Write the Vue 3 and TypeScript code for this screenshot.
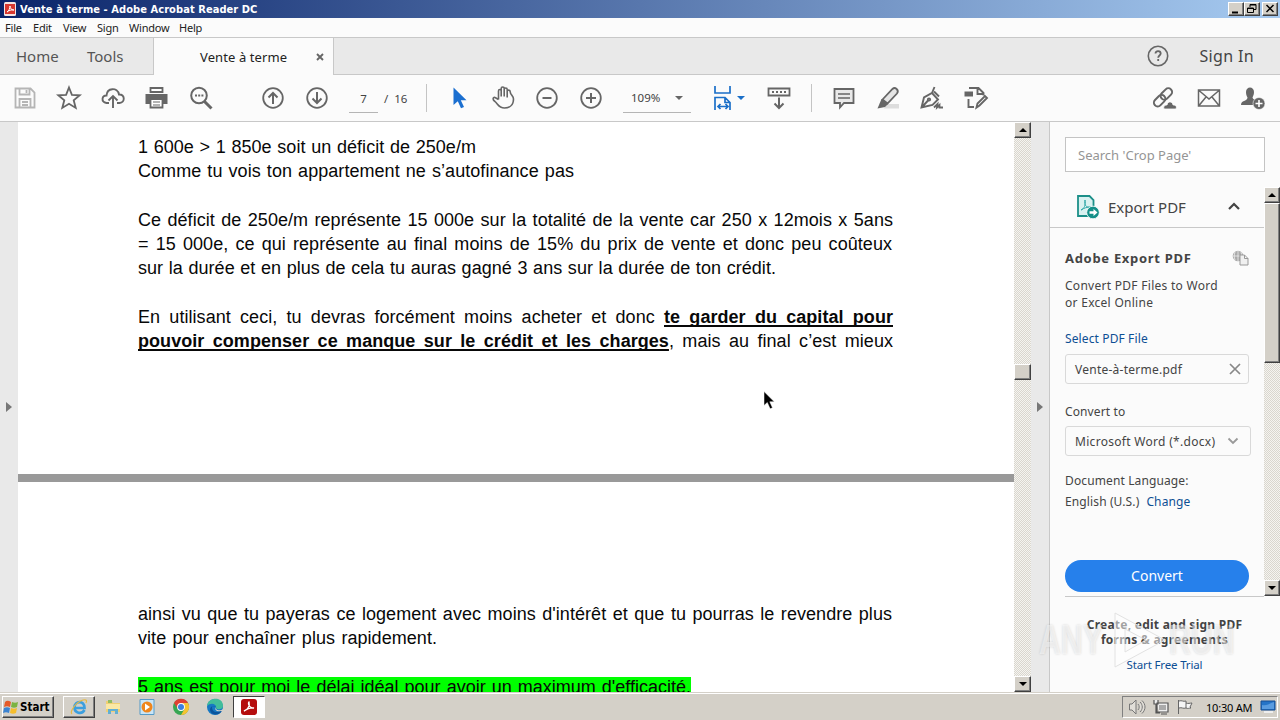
<script setup lang="ts">
import { ref } from "vue";

interface DocumentLine {
  text: string;
  strong?: string;
  tail?: string;
  width: number;
}

// States.
const menuItems = ref<string[]>(["File", "Edit", "View", "Sign", "Window", "Help"]);
const searchText = ref<string>("");

const firstPageBlocks: DocumentLine[][] = [
  [
    { text: "1 600e > 1 850e soit un déficit de 250e/m", width: 338 },
    { text: "Comme tu vois ton appartement ne s’autofinance pas", width: 436 },
  ],
  [
    { text: "Ce déficit de 250e/m représente 15 000e sur la totalité de la vente car 250 x 12mois x 5ans", width: 755 },
    { text: "= 15 000e, ce qui représente au final moins de 15% du prix de vente et donc peu coûteux", width: 754 },
    { text: "sur la durée et en plus de cela tu auras gagné 3 ans sur la durée de ton crédit.", width: 638 },
  ],
  [
    { text: "En utilisant ceci, tu devras forcément moins acheter et donc ", strong: "te garder du capital pour", width: 755 },
    { text: "", strong: "pouvoir compenser ce manque sur le crédit et les charges", tail: ", mais au final c’est mieux", width: 755 },
  ],
];

const secondPageLines: DocumentLine[] = [
  { text: "ainsi vu que tu payeras ce logement avec moins d'intérêt et que tu pourras le revendre plus", width: 754 },
  { text: "vite pour enchaîner plus rapidement.", width: 299 },
];
</script>

<template>
  <div class="desktop">
    <!-- TitleBar -->
    <header class="title-bar">
      <svg class="title-icon" viewBox="0 0 12 14">
        <rect width="12" height="14" rx="1.5" fill="#f5e5e3" />
        <path d="M1 2h10v10H1z" fill="#d8382f" />
        <path d="M3 10c2-1 3-4 3-6 0 2 1 4 4 4-3-.5-5 .5-7 2z" fill="none" stroke="#fff" />
      </svg>
      <span class="title-text">Vente à terme - Adobe Acrobat Reader DC</span>
      <div class="window-buttons">
        <svg class="raised" viewBox="0 0 14 12"><path d="M3 9.5h6" stroke="#000" stroke-width="2" /></svg>
        <svg class="raised" viewBox="0 0 14 12">
          <path d="M5 4V1.5h6v5H9M5 2h6M2.500 5h6v4.500h-6zM2.500 5.500h6" fill="none" stroke="#000" />
        </svg>
        <svg class="raised close" viewBox="0 0 14 12"><path d="M3.500 2l7 7M10.500 2l-7 7" stroke="#000" stroke-width="1.500" /></svg>
      </div>
    </header>

    <nav class="menu-bar">
      <span v-for="item in menuItems" v-bind:key="item" v-bind:class="`menu-${item.toLowerCase()}`">{{ item }}</span>
    </nav>

    <!-- Tabs -->
    <div class="tab-bar">
      <div class="main-tabs">
        <span class="tab-home">Home</span>
        <span class="tab-tools">Tools</span>
      </div>
      <div class="document-tab">
        <span>Vente à terme</span>
        <svg width="8" height="8" viewBox="0 0 8 8"><path d="M1 1l6 6M7 1L1 7" stroke="#666" stroke-width="1.900" /></svg>
      </div>
      <div class="account">
        <svg width="22" height="22" viewBox="0 0 22 22">
          <circle cx="11" cy="11" r="9.700" fill="none" stroke="#666" stroke-width="1.600" />
          <path d="M8.500 8.500c0-3.300 5.200-3 5.200 0 0 2-2.500 2-2.500 4.200M11.200 14v2" fill="none" stroke="#666" stroke-width="1.800" />
        </svg>
        <span>Sign In</span>
      </div>
    </div>

    <!-- Toolbar -->
    <div class="toolbar">
      <div class="tools file-tools">
        <svg class="muted" viewBox="0 0 24 24"><path d="M2.500 2.500h15l4 4v15h-19zM6.500 2.500v6h10v-6M13.500 4v3M6.500 21v-8h11v8M9 16h6M9 19h6" /></svg>
        <svg viewBox="0 0 24 24"><path d="M12 1.500l2.900 7.300 7.800.5-6 5 2 7.600-6.700-4.200-6.700 4.200 2-7.600-6-5 7.800-.5z" /></svg>
        <svg viewBox="0 0 24 24"><path d="M8 17H5.500C-.5 16 1 9 5.500 9.500 6 1.500 16.500 1 18 8.500c6-.5 6.500 8 .5 8.500H16M12 22V10.500M7.500 14.500L12 10l4.500 4.500" stroke-width="1.900" /></svg>
        <svg viewBox="0 0 24 24">
          <path d="M5.500 2h12v4h-12z" fill="#fff" />
          <path d="M.500 8h22v10H18v-4H5v4H.5z" fill="#666" stroke="none" />
          <path d="M5.500 13h12v8.500h-12z" fill="#fff" /><path d="M8 16h7M8 19h7" stroke-width="1.200" />
        </svg>
        <svg viewBox="0 0 24 24"><circle cx="10" cy="9.500" r="7.800" stroke-width="2" /><path d="M15.500 15.500l7 7" stroke-width="3" /><path d="M6 9.500h2M9.200 9.500h2M12.400 9.500h2" /></svg>
      </div>
      <div class="tools page-tools">
        <svg viewBox="0 0 24 24"><circle cx="12" cy="12" r="9.800" /><path d="M12 18V7M7.500 11.500L12 7l4.500 4.500" stroke-width="2" /></svg>
        <svg viewBox="0 0 24 24"><circle cx="12" cy="12" r="9.800" /><path d="M12 6v11M7.500 12.500L12 17l4.500-4.500" stroke-width="2" /></svg>
      </div>
      <div class="page-field">7</div>
      <span class="page-total">/&nbsp; 16</span>
      <i class="divider"></i>
      <div class="tools view-tools">
        <svg viewBox="0 0 24 24"><path d="M6.500 1.500v17.500l4.300-3.700 3.200 7 3-1.400-3.200-6.600h5.700z" fill="#1b6fd0" stroke="none" /></svg>
        <svg viewBox="0 0 24 24"><path d="M7 14V5.500c0-2 2.700-2 2.700 0V11 3c0-2 3-2 3 0v8-7c0-2 3-2 3 0v8-6c0-2 3-1.700 3 .2 0 3 3.300 4.300 3.300 7.300 0 6-4 9-9 9-6 0-6.500-4-9.500-6.500C.500 14 1.500 11 4 12.200L7 14" stroke-width="1.600" transform="translate(.5 -.5)" /></svg>
        <svg viewBox="0 0 24 24"><circle cx="12" cy="12" r="9.800" /><path d="M7.500 12h9" stroke-width="2" /></svg>
        <svg viewBox="0 0 24 24"><circle cx="12" cy="12" r="9.800" /><path d="M7 12h10M12 7v10" stroke-width="2" /></svg>
      </div>
      <div class="zoom-field"><span>109%</span><i class="caret"></i></div>
      <div class="fit-tool">
        <svg viewBox="0 0 20 26"><path d="M2 1v7h15V1M2 25V12.500h10l5 5V25M12 12.500v5h5M5 21.500h10M7.500 19L5 21.500 7.500 24M12.500 19l2.500 2.500-2.500 2.500" fill="none" stroke="#1b6fc8" stroke-width="1.700" /></svg>
        <i class="caret blue"></i>
      </div>
      <div class="tools"><svg viewBox="0 0 24 24"><path d="M1.500 2.500h21v7h-21z" /><path d="M5 6h14" stroke-dasharray="2 2" /><path d="M12 11.500V22M7.500 17.500L12 22l4.500-4.500" stroke-width="2" /></svg></div>
      <i class="divider second"></i>
      <div class="tools comment-tools">
        <svg viewBox="0 0 24 24"><path d="M2.500 3h19v14h-9.500l-4 4.500V17H2.500z" fill="#e9e9e9" /><path d="M6 8h12M6 12h12" stroke-width="1.500" /></svg>
        <svg viewBox="0 0 24 24"><path d="M10 18h13v4.500H8z" fill="#ddd" stroke="none" /><path d="M6.500 13.500L16.500 3c2.500-2.500 7 1 4.500 4.500L11.500 17.500z" fill="#e5e5e5" /><path d="M5.500 13l6.500 5-3 3-7.500 1.500z" fill="#666" stroke="none" /></svg>
        <svg viewBox="0 0 24 24"><path d="M1.500 21.500L4 11.500 12 7l6 6.500L12.500 19zM2 21l6.500-7M12 7l2.500-6M14 5.500l5 5" stroke-width="1.900" /><circle cx="9" cy="13.500" r="1.200" /><path d="M14 21.500l3.500-3.500-.5 3.500 2.500-2.500v2.500h3.500" stroke-width="1.800" /></svg>
        <svg viewBox="0 0 24 24"><path d="M5 2h9.500l5 5v2.500M13.500 2v6h5.500M4.500 13v8h5.500M12.500 21.500l1-4 7.500-7.500 2 2-7.500 7.500z" stroke-width="1.900" /><path d="M.500 5.500h8.500v5H.500z" fill="#666" stroke="none" /></svg>
      </div>
      <div class="tools share-tools">
        <svg viewBox="0 0 24 24"><g transform="rotate(-45 10 11)" stroke-width="2"><rect x="-1.500" y="7.500" width="13" height="7.500" rx="3.700" /><rect x="8" y="7.500" width="13" height="7.500" rx="3.700" /></g><path d="M11 23c-1-3 1-4 3-4 1-5 6-3 6 0 3-.5 4 2 3 4z" fill="#666" stroke="#fbfbfb" stroke-width=".8" /></svg>
        <svg viewBox="0 0 24 24"><path d="M1.500 4h21v16h-21zM2 4.500l10 8.500 10-8.500M2 19.500l7-8.500M22 19.500l-7-8.500" stroke-width="1.500" /></svg>
        <svg viewBox="0 0 24 24"><path d="M5 6c0-6 8-6 8 0 0 3-1 4-1.500 5.500.5 2 2.500 2 3 3L13 19H0c0-5 6-3 6.500-7.500C5.500 10 5 8 5 6z" fill="#666" stroke="none" /><circle cx="18" cy="17.500" r="6" fill="#666" stroke="#fbfbfb" stroke-width=".6" /><path d="M14.500 17.500h7M18 14v7" stroke="#fff" stroke-width="1.600" /></svg>
      </div>
    </div>

    <!-- Workspace -->
    <main class="workspace">
      <div class="left-rail"><i class="rail-arrow"></i></div>
      <article class="document">
        <section class="page first-page">
          <div v-for="(block, blockIndex) in firstPageBlocks" v-bind:key="blockIndex" class="block">
            <p v-for="line in block" v-bind:key="line.text" v-bind:style="{ width: `${line.width}px` }">{{ line.text }}<b v-if="line.strong">{{ line.strong }}</b>{{ line.tail }}</p>
          </div>
        </section>
        <section class="page second-page">
          <p v-for="line in secondPageLines" v-bind:key="line.text" v-bind:style="{ width: `${line.width}px` }">{{ line.text }}</p>
          <p class="highlighted"><span>5 ans est pour moi le délai idéal pour avoir un maximum d'efficacité.</span></p>
        </section>
        <svg class="pointer" viewBox="0 0 12 19"><path d="M1 .5v14l3.300-3 2.800 6.300 2.400-1-2.700-6h4.500z" fill="#000" stroke="#fff" stroke-width=".5" /></svg>
      </article>

      <div class="scrollbar document-scrollbar">
        <div class="scroll-button raised"><i class="triangle-up"></i></div>
        <div class="thumb raised"></div>
        <div class="scroll-button raised"><i class="triangle-down"></i></div>
      </div>
      <div class="right-rail"><i class="rail-arrow"></i></div>

      <aside class="panel">
        <div class="search"><input v-model="searchText" type="text" placeholder="Search 'Crop Page'" /></div>
        <div class="panel-scroll">
          <div class="panel-content">
            <div class="panel-heading">
              <svg width="24" height="26" viewBox="0 0 24 26">
                <path d="M2 2h11.500l4 4v16H2z" fill="#d8f1f0" stroke="#1c8f88" stroke-width="1.800" />
                <path d="M5 16c3-1 5-5 4-10-1 5 1 8 6 7-4 0-7 1-10 3z" fill="none" stroke="#3aa" />
                <circle cx="17" cy="18.500" r="6.300" fill="#148f88" stroke="#fff" stroke-width=".8" />
                <path d="M13.500 17.300h4v-2.300l4 3.500-4 3.500v-2.300h-4z" fill="#fff" />
              </svg>
              <span>Export PDF</span>
              <svg width="14" height="10" viewBox="0 0 14 10"><path d="M2 7l5-5 5 5" fill="none" stroke="#444" stroke-width="2.200" /></svg>
            </div>
            <div class="export-form">
              <div class="export-title">
                <b>Adobe Export PDF</b>
                <svg width="17" height="16" viewBox="0 0 17 16"><circle cx="6" cy="6" r="5.300" fill="#aaa" /><path d="M1 6h10M6 1v10M3 2c-1 3-1 5 0 8M9 2c1 3 1 5 0 8" stroke="#eee" fill="none" stroke-width=".8" /><path d="M8 5h4.500l3.500 3.500V15H8zM12.500 5v3.500H16" fill="#f0f0f0" stroke="#999" /></svg>
              </div>
              <p class="description">Convert PDF Files to Word<br />or Excel Online</p>
              <a class="select-file">Select PDF File</a>
              <div class="field file-field">
                <span>Vente-à-terme.pdf</span>
                <svg width="12" height="12" viewBox="0 0 12 12"><path d="M1 1l10 10M11 1L1 11" stroke="#888" stroke-width="1.700" /></svg>
              </div>
              <label class="convert-label">Convert to</label>
              <div class="field format-field">
                <span>Microsoft Word (*.docx)</span>
                <svg width="12" height="8" viewBox="0 0 12 8"><path d="M1.500 1.500L6 6l4.500-4.500" fill="none" stroke="#999" stroke-width="1.800" /></svg>
              </div>
              <p class="language-label">Document Language:</p>
              <p class="language"><span>English (U.S.)</span><a>Change</a></p>
              <button type="button" class="convert-button">Convert</button>
            </div>
          </div>
          <div class="scrollbar panel-scrollbar">
            <div class="scroll-button raised"><i class="triangle-up"></i></div>
            <div class="thumb raised"></div>
            <div class="scroll-button raised"><i class="triangle-down"></i></div>
          </div>
        </div>
        <div class="promo">
          <b>Create, edit and sign PDF<br />forms &amp; agreements</b>
          <a>Start Free Trial</a>
        </div>
        <div class="watermark">
          <span>ANY</span>
          <svg width="68" height="64" viewBox="0 0 68 64"><path d="M14 5v54l50-27zM24 21v23l21-12z" fill="#fff" fill-opacity=".5" stroke="#e2e2e2" fill-rule="evenodd" /></svg>
          <span>RUN</span>
        </div>
      </aside>
    </main>

    <!-- Taskbar -->
    <footer class="taskbar">
      <div class="start-button raised">
        <svg width="16" height="16" viewBox="0 0 16 16">
          <path d="M2 3c2-2 4-1 6 0L7 8C5 7 3 7 1 8z" fill="#e65b28" /><path d="M9 3c2 1 4 1 6 0l-1 5c-2 1-4 1-6 0z" fill="#7bb342" />
          <path d="M1 9c2-1 4-1 6 0l-1 5c-2-1-4-1-6 0z" fill="#3b83d1" /><path d="M8 9c2 1 4 1 6 0l-1 5c-2 1-4 1-6 0z" fill="#f5bd2c" />
        </svg>
        <b>Start</b>
      </div>
      <div class="task raised">
        <svg viewBox="0 0 18 18"><path d="M14.500 12c-3 5-10 3-10-2.500 0-7 10-7.500 10 .5H5" fill="none" stroke="#3c9fdf" stroke-width="2.700" /><path d="M2 16C-1 14 6 4 13 2c4-1 4 1 3 3" fill="none" stroke="#e5b944" stroke-width="1.200" /></svg>
      </div>
      <div class="task">
        <svg viewBox="0 0 18 18"><path d="M2 3h6l1 2h7v9H2z" fill="#f0cf73" /><path d="M4 2h4v3H4z" fill="#91bc62" /><path d="M2 6h14v5H2z" fill="#fae8a5" /><path d="M4 16v-5h10v5h-3v-3H7v3z" fill="#62afd2" /></svg>
      </div>
      <div class="task">
        <svg viewBox="0 0 18 18"><path d="M2 1.500h14v15H2z" fill="#c9e5f7" stroke="#559bc8" /><circle cx="9" cy="9" r="5.500" fill="#ef861c" /><path d="M7 5.500v7l5-3.500z" fill="#fff" /></svg>
      </div>
      <div class="task">
        <svg viewBox="0 0 18 18"><circle cx="9" cy="9" r="8" fill="#37a653" /><path d="M2 5a8 8 0 0 1 14 0l1 4H9L6 11z" fill="#df4033" /><path d="M9 5h7a8 8 0 0 1-7 12l3.500-6z" fill="#f6c331" /><circle cx="9" cy="9" r="3.900" fill="#fff" /><circle cx="9" cy="9" r="3" fill="#3c7fe0" /></svg>
      </div>
      <div class="task">
        <svg viewBox="0 0 18 18"><circle cx="9" cy="9" r="8" fill="#1678c3" /><path d="M1 8C2-1 17-2 17 8c0 4-6 4-7 2 1-4-5-6-9-2z" fill="#42bd9a" /><path d="M6 9c0 6 6 6 10 3-2 6-11 6-12 0 0-4 4-5 6-3-2-1-4-1-4 0z" fill="#0b549c" /><path d="M10 9c-1 4 5 4 7 2l1 2-3 0c-4 1-7-1-5-4z" fill="#d4d0c8" /></svg>
      </div>
      <div class="task pressed">
        <svg viewBox="0 0 18 18"><rect x="1" y="1" width="16" height="16" rx="3" fill="#b50d0d" /><path d="M4 13c4-1 6-6 5-9-1 0-1 6 5 6-4-1-7 1-10 3z" fill="none" stroke="#fff" stroke-width="1.300" /></svg>
      </div>

      <div class="tray">
        <svg viewBox="0 0 18 18"><path d="M1.500 6H4l4-4v14l-4-4H1.500zM10 6c1.500 2 1.500 4 0 6M12 4c3 3 3 7 0 10M14 2.500c4 4 4 9 0 13" fill="#fff" fill-opacity=".3" stroke="#777" /></svg>
        <svg viewBox="0 0 18 18"><path d="M5 5h11v9H5zM9 16h6M2 2v4h4V2M4 6v9h4" fill="#eee" stroke="#555" stroke-width="1.200" /><path d="M7 7h7v5H7z" fill="#aaa" /></svg>
        <svg viewBox="0 0 18 18"><path d="M2.500 2v14M3 3c3-1 4 1 7 0v7c-3 1-4-1-7 0M10 5c2 1 4 0 6 0l-2 4 1 1c-2 0-3 1-5 0" fill="#f5f5f5" stroke="#666" /></svg>
        <span>10:30 AM</span>
        <svg class="desktop-icon" viewBox="0 0 16 16"><path d="M1 2h14v9H1z" fill="#2574c8" stroke="#174c91" /><path d="M2 6c5 1 8-2 12-3v7H2z" fill="#5a9ce0" /><path d="M4 13h9" stroke="#eee" stroke-width="2" /></svg>
      </div>
    </footer>
  </div>
</template>

<style>
body {
  overflow: hidden;
}
</style>

<style scoped>
.desktop {
  width: 1280px;
  height: 720px;
  display: flex;
  flex-direction: column;
  overflow: hidden;
  background: #fbfbfb;
  color: #444;
  font-family: "Noto Sans", sans-serif;
}

.desktop *,
.desktop *::before {
  box-sizing: border-box;
}

p {
  margin: 0;
}

svg {
  display: block;
  flex-shrink: 0;
}

.raised {
  background: #d4d0c8;
  border: 1px solid;
  border-color: #fff #404040 #404040 #fff;
  box-shadow: inset -1px -1px #808080;
}

/* Window chrome */
.title-bar {
  height: 18px;
  display: flex;
  align-items: center;
  padding: 0 2px 0 4px;
  background: linear-gradient(90deg, #0a246a, #a6caf0);
  color: #fff;
}

.title-icon {
  width: 12px;
  height: 14px;
  margin-right: 4px;
}

.title-text {
  font: bold 11px/16px "DejaVu Sans Condensed", "DejaVu Sans", sans-serif;
  letter-spacing: 0.07px;
  padding-top: 1px;
  white-space: nowrap;
}

.window-buttons {
  display: flex;
  margin-left: auto;
}

.window-buttons svg {
  width: 16px;
  height: 14px;
}

.window-buttons .close {
  margin-left: 2px;
}

.menu-bar {
  height: 20px;
  display: flex;
  align-items: center;
  border-bottom: 1px solid #c8c8c8;
  padding-left: 5px;
  font-size: 11px;
  letter-spacing: -0.2px;
  color: #222;
}

.menu-file { width: 28px; }
.menu-edit { width: 30px; }
.menu-view { width: 34px; }
.menu-sign { width: 32px; }
.menu-window { width: 50px; }

.tab-bar {
  height: 37px;
  display: flex;
  background: #e9e9e9;
  font-size: 15px;
}

.main-tabs,
.account {
  display: flex;
  align-items: center;
  border-bottom: 1px solid #c8c8c8;
}

.main-tabs {
  width: 154px;
  padding-left: 16px;
  border-right: 1px solid #c8c8c8;
  color: #555;
}

.tab-home {
  width: 71px;
}

.document-tab {
  width: 180px;
  display: flex;
  align-items: center;
  justify-content: space-between;
  padding: 0 9px 0 46px;
  background: #fbfbfb;
  border-right: 1px solid #c8c8c8;
  font-size: 13px;
  letter-spacing: 0.1px;
  color: #222;
}

.account {
  flex: 1;
  justify-content: flex-end;
  gap: 30px;
  padding-right: 26px;
}

.account span {
  font-size: 16px;
  letter-spacing: 0.35px;
}

/* Toolbar */
.toolbar {
  height: 47px;
  display: flex;
  align-items: center;
  flex-shrink: 0;
  border-bottom: 1px solid #c8c8c8;
  padding-left: 3px;
  font-size: 11.5px;
}

.tools {
  display: flex;
}

.tools svg {
  width: 24px;
  height: 24px;
  margin: 0 10px;
  fill: none;
  stroke: #666;
  stroke-width: 1.8;
  overflow: visible;
}

.tools .muted {
  stroke: #b5b5b5;
}

.page-tools {
  margin-left: 28px;
}

.page-field {
  width: 29px;
  height: 29px;
  margin-left: 10px;
  border-bottom: 1px solid #b5b5b5;
  text-align: center;
  line-height: 29px;
}

.page-total {
  width: 41px;
  padding-left: 6px;
}

.divider {
  width: 1px;
  height: 28px;
  margin-left: 7px;
  background: #c4c4c4;
}

.view-tools {
  margin-left: 10px;
}

.zoom-field {
  width: 68px;
  height: 29px;
  display: flex;
  align-items: center;
  justify-content: space-between;
  margin-left: 10px;
  padding: 0 8px;
  border-bottom: 1px solid #b5b5b5;
}

.caret {
  border: 4px solid transparent;
  border-top-color: #666;
  border-bottom: 0;
}

.caret.blue {
  border-top-color: #1b6fc8;
}

.fit-tool {
  width: 45px;
  display: flex;
  align-items: center;
  gap: 4px;
  margin: 0 -1px 0 22px;
}

.fit-tool svg {
  width: 20px;
  height: 26px;
}

.divider.second {
  margin-left: 10px;
}

.comment-tools {
  margin-left: 10px;
}

.share-tools {
  margin-left: auto;
  padding-right: 5px;
}

/* Workspace */
.workspace {
  height: 570px;
  display: flex;
  flex-shrink: 0;
}

.left-rail,
.right-rail {
  width: 18px;
  display: flex;
  align-items: center;
  justify-content: center;
  background: #e9e9e9;
}

.rail-arrow {
  border: 5px solid transparent;
  border-left: 6px solid #777;
  border-right: 0;
}

.document {
  width: 996px;
  position: relative;
  overflow: hidden;
  background: #fff;
  color: #080808;
  font-family: "Liberation Sans", sans-serif;
  font-size: 18px;
  line-height: 24.3px;
}

.page {
  padding-left: 120px;
}

.page p {
  text-align-last: justify;
  white-space: pre-wrap;
  letter-spacing: 0.05px;
}

.first-page {
  height: 360px;
  padding-top: 13px;
  border-bottom: 8px solid #999;
}

.block {
  margin-bottom: 24.3px;
}

.first-page b {
  text-decoration: underline;
  text-decoration-thickness: 2px;
  text-underline-offset: 2px;
  text-decoration-skip-ink: none;
}

.second-page {
  padding-top: 120px;
}

.page .highlighted {
  width: 553px;
  margin-top: 24.3px;
  letter-spacing: 0;
}

.highlighted span {
  background: #0f0;
}

.pointer {
  position: absolute;
  left: 745px;
  top: 269px;
  width: 12px;
  height: 19px;
}

.scrollbar {
  display: flex;
  flex-direction: column;
  background: repeating-conic-gradient(#d9d6ce 0 25%, #f5f4f0 0 50%) 0 0 / 2px 2px;
}

.document-scrollbar {
  width: 17px;
}

.scroll-button {
  height: 16px;
  display: flex;
  align-items: center;
  justify-content: center;
}

.document-scrollbar .thumb {
  height: 16px;
  margin: 226px 0 296px;
}

.triangle-up,
.triangle-down {
  border: 4px solid transparent;
}

.triangle-up {
  border-top: 0;
  border-bottom-color: #000;
}

.triangle-down {
  border-bottom: 0;
  border-top-color: #000;
}

/* Export panel */
.panel {
  width: 231px;
  position: relative;
  display: flex;
  flex-direction: column;
  border-left: 1px solid #c8c8c8;
}

.search {
  height: 65px;
  padding: 15px 15px 0;
}

.search input {
  width: 200px;
  height: 35px;
  border: 1px solid #c4c4c4;
  padding: 0 12px;
  background: #fff;
  font: 13px "Noto Sans", sans-serif;
}

.search input::placeholder {
  color: #959595;
}

.panel-scroll {
  height: 409px;
  display: flex;
}

.panel-content {
  width: 214px;
}

.panel-heading {
  height: 41px;
  display: flex;
  align-items: center;
  padding: 0 23px 0 26px;
  border-bottom: 1px solid #c8c8c8;
  font-size: 15px;
}

.panel-heading span {
  margin: 0 auto 0 8px;
}

.export-form {
  display: flex;
  flex-direction: column;
  padding: 20px 15px 0;
  font-size: 12px;
  line-height: 17px;
  letter-spacing: 0.12px;
}

.export-title {
  height: 20px;
  display: flex;
  align-items: center;
  justify-content: space-between;
  font-size: 13px;
  letter-spacing: 0.7px;
}

.description {
  margin-top: 9px;
  letter-spacing: 0.28px;
}

a {
  color: #0d4f94;
}

.select-file {
  margin-top: 19px;
}

.field {
  height: 30px;
  display: flex;
  align-items: center;
  justify-content: space-between;
  border: 1px solid #d9d9d9;
  border-radius: 3px;
  padding: 0 7px 0 9px;
  letter-spacing: 0.25px;
}

.file-field {
  width: 184px;
  margin-top: 7px;
}

.convert-label {
  margin-top: 19px;
}

.format-field {
  width: 186px;
  margin-top: 6px;
  padding-right: 11px;
  letter-spacing: 0.3px;
}

.language-label {
  margin-top: 16px;
}

.language {
  display: flex;
  gap: 7px;
  margin-top: 4px;
}

.convert-button {
  width: 184px;
  height: 32px;
  margin-top: 50px;
  border: 0;
  border-radius: 16px;
  padding: 0 6px 2px;
  background: #2680eb;
  color: #fff;
  font: 14px "Noto Sans", sans-serif;
}

.panel-scrollbar {
  width: 16px;
}

.panel-scrollbar .thumb {
  height: 160px;
  margin-bottom: 217px;
}

.promo {
  height: 96px;
  display: flex;
  flex-direction: column;
  align-items: center;
  margin: 0 16px 0 15px;
  padding-top: 20px;
  border-top: 1px solid #c8c8c8;
  font-size: 12px;
  line-height: 15px;
  letter-spacing: 0.25px;
  text-align: center;
}

.promo a {
  margin-top: 10px;
  font-size: 11.5px;
  letter-spacing: -0.15px;
}

.watermark {
  position: absolute;
  left: -11px;
  top: 486px;
  display: flex;
  align-items: center;
  color: rgba(255, 255, 255, 0.55);
  font: bold 42px "Liberation Sans", sans-serif;
  text-shadow: 0 0 3px rgba(0, 0, 0, 0.15);
}

.watermark span {
  width: 62px;
  transform: scaleX(0.72);
  transform-origin: left;
}

/* Taskbar */
.taskbar {
  height: 28px;
  display: flex;
  align-items: center;
  flex-shrink: 0;
  padding: 2px 2px 0;
  background: #d4d0c8;
  box-shadow: inset 0 1px #d4d0c8, inset 0 2px #fff;
}

.start-button {
  width: 52px;
  height: 22px;
  display: flex;
  align-items: center;
  gap: 1px;
  margin-right: 9px;
  color: #000;
  font: 11.5px "DejaVu Sans Condensed", "DejaVu Sans", sans-serif;
}

.task {
  width: 32px;
  height: 22px;
  display: flex;
  align-items: center;
  justify-content: center;
  margin-right: 2px;
}

.task svg {
  width: 18px;
  height: 18px;
}

.pressed {
  background: #fff;
  border: 1px solid;
  border-color: #404040 #fff #fff #404040;
}

.tray {
  width: 156px;
  height: 22px;
  display: flex;
  align-items: center;
  gap: 6px;
  margin-left: auto;
  padding-left: 5px;
  border: 1px solid;
  border-color: #808080 #fff #fff #808080;
  color: #000;
  font-size: 11px;
  letter-spacing: -0.2px;
}

.tray svg {
  width: 18px;
  height: 18px;
}

.tray span {
  width: 48px;
  margin-left: 6px;
  white-space: nowrap;
}

.tray .desktop-icon {
  width: 16px;
  height: 16px;
}
</style>
